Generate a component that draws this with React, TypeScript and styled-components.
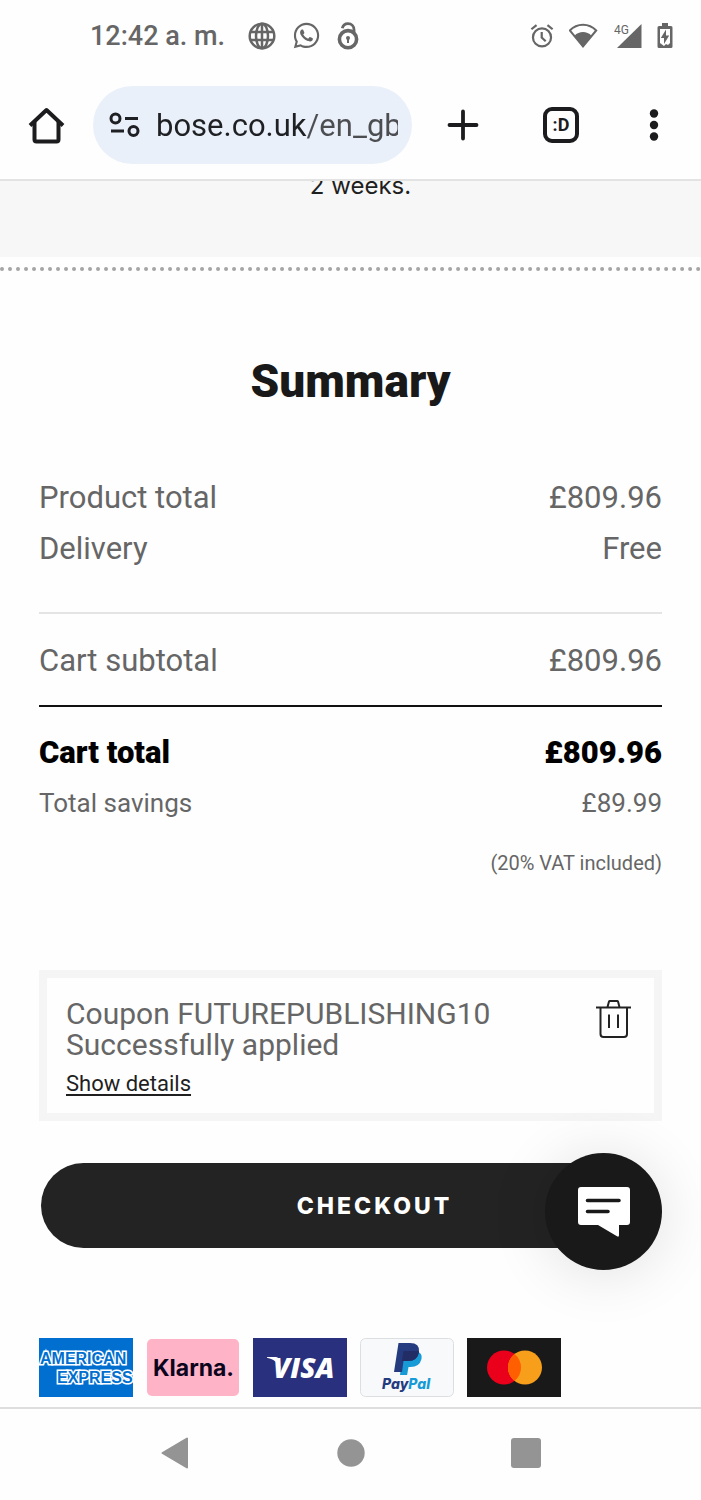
import React from "react";
import styled, { createGlobalStyle } from "styled-components";
import { FaWhatsapp } from "react-icons/fa";

const GlobalStyle = createGlobalStyle`
  *, *::before, *::after { box-sizing: border-box; }
  body { margin: 0; background: #fff; font-family: Roboto, "Liberation Sans", sans-serif; }
  button { border: 0; padding: 0; background: none; font: inherit; color: inherit; cursor: pointer; }
  svg { display: block; flex: none; }
`;

const Screen = styled.div`
  display: flex;
  flex-direction: column;
  min-height: 100vh;
  background: #fefefe;
`;

const StatusBar = styled.header`
  display: flex;
  align-items: center;
  justify-content: space-between;
  height: 71px;
  padding: 0 28px 0 90px;
  color: #666;
`;

const StatusGroup = styled.div<{ $gap: number }>`
  display: flex;
  align-items: center;
  gap: ${(p) => p.$gap}px;
`;

const Clock = styled.span`
  font-size: 27px;
  font-weight: 500;
  line-height: 32px;
  margin-right: 7px;
`;

const BrowserBar = styled.div`
  display: flex;
  align-items: center;
  height: 110px;
  padding: 0 36px 0 28px;
  border-bottom: 2px solid #e3e3e3;
  color: #1c1c1e;
`;

const AddressBar = styled.label`
  display: flex;
  align-items: center;
  flex: 1;
  min-width: 0;
  height: 78px;
  margin: 0 35px 0 28px;
  padding: 0 14px 0 16px;
  gap: 16px;
  border-radius: 39px;
  background: #eaf0f9;
`;

const AddressInput = styled.input`
  flex: 1;
  min-width: 0;
  padding: 0;
  border: 0;
  outline: 0;
  font-family: Roboto, "Liberation Sans", sans-serif;
  font-size: 31px;
  line-height: 40px;
  height: 44px;
  color: transparent;
  background: linear-gradient(90deg, #1f2023 150px, #4b4d51 150px);
  background-clip: text;
  -webkit-background-clip: text;
`;

const Tools = styled.div`
  display: flex;
  align-items: center;
  gap: 64px;
`;

const TabsButton = styled.button`
  width: 36px;
  height: 36px;
  border: 4px solid #1c1c1e;
  border-radius: 9px;
  font-family: "Liberation Sans Narrow", Roboto, sans-serif;
  font-size: 18px;
  font-weight: 700;
  line-height: 26px;
`;

const MenuButton = styled.button`
  padding: 0 6px;
`;

const Page = styled.main`
  flex: 1;
  overflow: hidden;
`;

const Notice = styled.div`
  height: 76px;
  background: #f7f7f7;
  overflow: hidden;
`;

const NoticeText = styled.p`
  margin: -12px 0 0;
  padding-left: 20px;
  text-align: center;
  font-family: Inter, sans-serif;
  font-size: 24px;
  line-height: 34px;
  color: #1f1f1f;
`;

const Dots = styled.hr`
  margin: 10px 0 0;
  border: 0;
  border-top: 4px dotted #a5a5a5;
`;

const Summary = styled.section`
  padding: 0 39px;
`;

const Title = styled.h1`
  margin: 80px 0 0;
  font-size: 46px;
  font-weight: 900;
  line-height: 60px;
  text-align: center;
  color: #191919;
`;

const Totals = styled.dl<{ $space: number }>`
  margin: 0;
  padding-top: ${(p) => p.$space}px;
`;

const Row = styled.div<{ $tone?: "total" | "small" }>`
  display: flex;
  justify-content: space-between;
  font-size: ${(p) => (p.$tone === "small" ? 26 : 31)}px;
  font-weight: ${(p) => (p.$tone === "total" ? 900 : 400)};
  line-height: 51px;
  color: ${(p) => (p.$tone === "total" ? "#000" : "#666")};
  dt, dd { margin: 0; }
`;

const Rule = styled.hr<{ $dark?: boolean }>`
  margin: ${(p) => (p.$dark ? 19 : 38)}px 0 0;
  border: 0;
  border-top: 2px solid ${(p) => (p.$dark ? "#111" : "#e4e4e4")};
`;

const Vat = styled.p`
  margin: 18px 0 0;
  font-size: 20px;
  line-height: 32px;
  text-align: right;
  color: #666;
`;

const Coupon = styled.section`
  display: flex;
  justify-content: space-between;
  align-items: flex-start;
  margin-top: 91px;
  padding: 20px 23px 13px 19px;
  border: 8px solid #f5f5f5;
  color: #666;
`;

const CouponText = styled.p`
  margin: 0;
  font-size: 30px;
  line-height: 31px;
`;

const RemoveButton = styled.button`
  padding-top: 2px;
`;

const Details = styled.a`
  display: inline-block;
  margin-top: 8px;
  font-size: 22px;
  line-height: 32px;
  color: #1f1f1f;
  text-underline-offset: 3px;
  text-decoration-thickness: 2px;
`;

const CheckoutArea = styled.div`
  position: relative;
  margin-top: 42px;
  padding: 0 2px;
`;

const CheckoutButton = styled.button`
  width: 100%;
  height: 85px;
  padding: 0 0 0 48px;
  border-radius: 43px;
  background: #232323;
  color: #fff;
  font-family: Inter, sans-serif;
  font-size: 23px;
  font-weight: 800;
  letter-spacing: 3px;
`;

const ChatButton = styled.button`
  position: absolute;
  top: -10px;
  right: 0;
  display: grid;
  place-items: center;
  width: 117px;
  height: 117px;
  border-radius: 50%;
  background: #191919;
  box-shadow: 0 4px 60px rgba(0, 0, 0, 0.12);
`;

const Payments = styled.ul`
  display: flex;
  gap: 13px;
  margin: 0;
  padding: 90px 0 10px;
  list-style: none;
`;

const NavBar = styled.nav`
  display: flex;
  justify-content: center;
  align-items: center;
  gap: 146px;
  height: 93px;
  padding-bottom: 3px;
  border-top: 2px solid #dedede;
  color: #949494;
`;

const GlobeIcon = () => (
  <svg width="28" height="28" viewBox="0 0 28 28" fill="none" stroke="currentColor" strokeWidth="2.5">
    <circle cx="14" cy="14" r="12.3" />
    <ellipse cx="14" cy="14" rx="6" ry="12.3" />
    <path d="M14 2v24M2.5 10h23M2.5 18h23" />
  </svg>
);

const LockIcon = () => (
  <svg width="22" height="28" viewBox="0 0 22 28" fill="none" stroke="currentColor">
    <circle cx="11" cy="17.2" r="8.6" strokeWidth="3.6" />
    <path d="M5.3 6.3C6 3.3 8.2 1.7 11 1.7c3.7 0 6 2.5 6 6V10" strokeWidth="2.8" />
    <circle cx="11" cy="16" r="2" fill="currentColor" stroke="none" />
    <path d="M11 16v5" strokeWidth="2" />
  </svg>
);

const AlarmIcon = () => (
  <svg width="24" height="26" viewBox="0 0 26 26" fill="none" stroke="currentColor" strokeWidth="2.4">
    <circle cx="13" cy="14.5" r="9.8" />
    <path d="M12.7 8.7v6l4.3 4M1.5 5.7l5.6-4.5M24.5 5.7l-5.6-4.5" />
  </svg>
);

const WifiIcon = () => (
  <svg width="30" height="26" viewBox="1 0 30 26" fill="none" stroke="currentColor" strokeWidth="2">
    <path d="M1.8 7.5C9-.3 21-.3 28.2 7.5L15 23.5z" />
    <path d="M6.500 12.800c4.500-5 12.500-5 17 0L15 24.2z" fill="currentColor" stroke="none" />
  </svg>
);

const SignalIcon = () => (
  <svg width="28" height="26" viewBox="0 0 28 26" fill="currentColor">
    <path d="M27.5 1v24H3z" />
    <text x="0" y="11" fontFamily="Liberation Sans Narrow, Roboto, sans-serif" fontSize="12">4G</text>
  </svg>
);

const BatteryIcon = () => (
  <svg width="16" height="26" viewBox="0 0 16 26">
    <path d="M5 0h6v3h3q1.5 0 1.5 1.5v19q0 1.5-1.5 1.5H2Q.5 25 .5 23.5v-19Q.5 3 2 3h3z" fill="currentColor" />
    <path d="M3 6h10v14l-2 2-2-1-2 2-4-3z" fill="#fff" />
    <path d="M9 6.5L3.8 15H7v6l5.2-8.5H9z" fill="currentColor" />
  </svg>
);

const HomeIcon = () => (
  <svg width="37" height="37" viewBox="0 0 37 37" fill="none" stroke="currentColor" strokeWidth="4" strokeLinejoin="round">
    <path d="M2 18.5L18.5 3 35 18.5" />
    <path d="M6.5 15v17.5q0 2 2 2h20q2 0 2-2V15" />
  </svg>
);

const SiteIcon = () => (
  <svg width="31" height="26" viewBox="0 0 31 26" fill="none" stroke="#1f2023" strokeWidth="3">
    <circle cx="6.5" cy="6.5" r="4.5" />
    <circle cx="24.5" cy="19" r="4.5" />
    <path d="M16 6.5h13M2 19h13" />
  </svg>
);

const PlusIcon = () => (
  <svg width="32" height="32" viewBox="0 0 32 32" fill="none" stroke="currentColor" strokeWidth="3.8" strokeLinecap="round">
    <path d="M16 2.5v27M2.5 16h27" />
  </svg>
);

const DotsIcon = () => (
  <svg width="10" height="32" viewBox="0 0 10 32" fill="currentColor">
    <circle cx="5" cy="4.5" r="4.2" />
    <circle cx="5" cy="16" r="4.2" />
    <circle cx="5" cy="27.5" r="4.2" />
  </svg>
);

const TrashIcon = () => (
  <svg width="35" height="38" viewBox="0 0 35 38" fill="none" stroke="#222" strokeWidth="2">
    <path d="M0 7.5h35M11.5 7l1.5-5.5q.2-.5.8-.5h7.4q.6 0 .8.5L23.5 7" />
    <path d="M4.5 7.5V34q0 3 3 3h20.5q3 0 3-3V7.5M13 14.5V28M22 14.5V28" />
  </svg>
);

const ChatIcon = () => (
  <svg width="52" height="50" viewBox="0 0 52 50">
    <path d="M3 0h46q3 0 3 3v32q0 3-3 3h-8v10q0 2.5-2 1.3L20 38H3q-3 0-3-3V3Q0 0 3 0z" fill="#fff" />
    <path d="M9.500 13.5h31.500M9.500 24.5h20.500" stroke="#191919" strokeWidth="3.6" strokeLinecap="round" />
  </svg>
);

const AmexLogo = () => (
  <svg width="94" height="59" viewBox="0 0 94 59" role="img" aria-label="American Express">
    <path d="M0 0h94v59H0z" fill="#016fd0" />
    <g fontFamily="Liberation Sans, sans-serif" fontSize="16" fontWeight="700" fill="#016fd0" stroke="#fff" strokeWidth="3" paintOrder="stroke">
      <text x="1" y="26">AMERICAN</text>
      <text x="18" y="45">EXPRESS</text>
    </g>
  </svg>
);

const KlarnaLogo = () => (
  <svg width="94" height="59" viewBox="0 0 94 59" role="img" aria-label="Klarna">
    <rect x="1" y="1" width="92" height="57" rx="5" fill="#ffb3c7" />
    <text x="7" y="38" fontFamily="Inter, sans-serif" fontSize="23" fontWeight="700" fill="#0b051d">Klarna.</text>
  </svg>
);

const VisaLogo = () => (
  <svg width="94" height="59" viewBox="0 0 94 59" role="img" aria-label="Visa">
    <path d="M0 0h94v59H0z" fill="#29307d" />
    <path d="M14 19h9q2 0 2.5 2l2 9-3-4q-3-5-10.500-6.300z" fill="#fff" />
    <text x="20" y="40" fontFamily="Open Sans, sans-serif" fontSize="28" fontWeight="800" fontStyle="italic" fill="#fff">VISA</text>
  </svg>
);

const PayPalLogo = () => (
  <svg width="94" height="59" viewBox="0 0 94 59" role="img" aria-label="PayPal">
    <rect x="0.5" y="0.5" width="93" height="58" rx="5" fill="#f7f9fa" stroke="#dcdfe1" />
    <path d="M43 13h13q7 2 5.5 8-2 8-11 8h-2l-1.400 8H40z" fill="#179bd7" />
    <path d="M38.5 5H50q10 0 9 9-1.500 9-11 9h-4.500L42 34h-8z" fill="#253b80" />
    <path d="M43.5 13H58q1 0 1 1-1.500 9-11 9h-6z" fill="#222d65" />
    <text x="22" y="51" fontFamily="Inter, sans-serif" fontSize="14" fontWeight="800" fontStyle="italic" fill="#253b80">
      Pay<tspan fill="#179bd7">Pal</tspan>
    </text>
  </svg>
);

const MastercardLogo = () => (
  <svg width="94" height="59" viewBox="0 0 94 59" role="img" aria-label="Mastercard">
    <path d="M0 0h94v59H0z" fill="#191919" />
    <circle cx="37" cy="29.5" r="17" fill="#eb001b" />
    <circle cx="58" cy="29.5" r="17" fill="#f79e1b" />
    <path d="M47.5 16.100a17 17 0 0 1 0 26.800a17 17 0 0 1 0-26.800z" fill="#ff5f00" />
  </svg>
);

const logos = [AmexLogo, KlarnaLogo, VisaLogo, PayPalLogo, MastercardLogo];

type RowData = { label: string; value: string; tone?: "total" | "small" };

const Rows = ({ items, space }: { items: RowData[]; space: number }) => (
  <Totals $space={space}>
    {items.map((r) => (
      <Row key={r.label} $tone={r.tone}>
        <dt>{r.label}</dt>
        <dd>{r.value}</dd>
      </Row>
    ))}
  </Totals>
);

export default function App() {
  return (
    <Screen>
      <GlobalStyle />
      <StatusBar>
        <StatusGroup $gap={16}>
          <Clock>12:42 a. m.</Clock>
          <GlobeIcon />
          <FaWhatsapp size={29} />
          <LockIcon />
        </StatusGroup>
        <StatusGroup $gap={15}>
          <AlarmIcon />
          <WifiIcon />
          <SignalIcon />
          <BatteryIcon />
        </StatusGroup>
      </StatusBar>
      <BrowserBar>
        <button aria-label="Home"><HomeIcon /></button>
        <AddressBar>
          <SiteIcon />
          <AddressInput aria-label="Address" defaultValue="bose.co.uk/en_gb" />
        </AddressBar>
        <Tools>
          <button aria-label="New tab"><PlusIcon /></button>
          <TabsButton aria-label="Open tabs">:D</TabsButton>
          <MenuButton aria-label="Menu"><DotsIcon /></MenuButton>
        </Tools>
      </BrowserBar>
      <Page>
        <Notice>
          <NoticeText>2 weeks.</NoticeText>
        </Notice>
        <Dots />
        <Summary>
          <Title>Summary</Title>
          <Rows space={61} items={[{ label: "Product total", value: "£809.96" }, { label: "Delivery", value: "Free" }]} />
          <Rule />
          <Rows space={21} items={[{ label: "Cart subtotal", value: "£809.96" }]} />
          <Rule $dark />
          <Rows
            space={20}
            items={[
              { label: "Cart total", value: "£809.96", tone: "total" },
              { label: "Total savings", value: "£89.99", tone: "small" },
            ]}
          />
          <Vat>(20% VAT included)</Vat>
          <Coupon>
            <div>
              <CouponText>
                Coupon FUTUREPUBLISHING10
                <br />
                Successfully applied
              </CouponText>
              <Details href="#details">Show details</Details>
            </div>
            <RemoveButton aria-label="Remove coupon"><TrashIcon /></RemoveButton>
          </Coupon>
          <CheckoutArea>
            <CheckoutButton>CHECKOUT</CheckoutButton>
            <ChatButton aria-label="Chat"><ChatIcon /></ChatButton>
          </CheckoutArea>
          <Payments>
            {logos.map((Logo, i) => (
              <li key={i}><Logo /></li>
            ))}
          </Payments>
        </Summary>
      </Page>
      <NavBar>
        <button aria-label="Back">
          <svg width="30" height="32" viewBox="2 0 30 32"><path d="M28 1.5v29L3.5 16z" fill="currentColor" stroke="currentColor" strokeWidth="2" strokeLinejoin="round" /></svg>
        </button>
        <button aria-label="Home screen">
          <svg width="28" height="28" viewBox="0 0 28 28"><circle cx="14" cy="14" r="13.7" fill="currentColor" /></svg>
        </button>
        <button aria-label="Recent apps">
          <svg width="30" height="30" viewBox="0 0 30 30"><rect width="30" height="30" rx="3" fill="currentColor" /></svg>
        </button>
      </NavBar>
    </Screen>
  );
}
